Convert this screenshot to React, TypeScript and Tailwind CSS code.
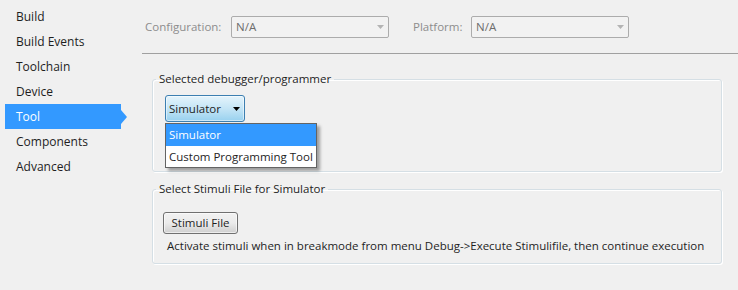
const navItems = ["Build", "Build Events", "Toolchain", "Device", "Tool", "Components", "Advanced"];

function Caret({ color }: { color: string }) {
  return (
    <svg width="7" height="4" viewBox="0 0 7 4" className="shrink-0">
      <path d="M0 0h7L3.5 4z" fill={color} />
    </svg>
  );
}

function DisabledSelect() {
  return (
    <div className="flex h-[22px] w-[158px] items-center justify-between rounded-[2px] border border-[#acacac] bg-[#f2f2f2] pl-[4px] pr-[4px] text-[#6d6d6d]">
      <span>N/A</span>
      <Caret color="#b4b4b4" />
    </div>
  );
}

export default function App() {
  return (
    <div className="flex h-[290px] w-[738px] whitespace-nowrap bg-[#f0f0f0] font-['Open_Sans',sans-serif] text-[11.5px] text-[#1e1e1e]">
      {/* Left nav */}
      <div className="flex w-[142px] shrink-0 flex-col pl-[5px] pt-[4px] text-[12px]">
        {navItems.map((item) =>
          item === "Tool" ? (
            <div key={item} className="relative flex h-[25px] w-[116px] items-center bg-[#3399ff] pl-[11px] text-white">
              {item}
              <span className="absolute left-full top-1/2 h-0 w-0 -translate-y-1/2 border-y-[7px] border-l-[6px] border-y-transparent border-l-[#3399ff]" />
            </div>
          ) : (
            <div key={item} className="flex h-[25px] items-center pl-[11px]">
              {item}
            </div>
          )
        )}
      </div>

      {/* Right panel */}
      <div className="flex flex-1 flex-col">
        <div className="flex h-[54px] items-start border-b border-[#a0a0a0] pl-[3px] pt-[16px]">
          <div className="flex h-[22px] w-[86px] items-center text-[#8d8d8d]">Configuration:</div>
          <DisabledSelect />
          <div className="ml-[24px] flex h-[22px] w-[58px] items-center text-[#8d8d8d]">Platform:</div>
          <DisabledSelect />
        </div>

        {/* Group 1 */}
        <fieldset className="relative ml-[10px] mt-[17px] h-[101px] w-[570px] rounded-[3px] border border-[#d5dfe5] shadow-[1px_1px_0_#fff,inset_1px_1px_0_#fff]">
          <legend className="ml-[3px] px-[3px] leading-[16px]">Selected debugger/programmer</legend>
          <div className="ml-[12px] mt-[8px] flex h-[27px] w-[80px] items-center justify-between rounded-[3px] border border-[#3c7fb1] bg-gradient-to-b from-[#e5f4fc] via-[#c4e5f6] to-[#98d1ef] pl-[3px] pr-[4px] shadow-[inset_0_0_0_1px_rgba(255,255,255,0.5)]">
            <span>Simulator</span>
            <Caret color="#000" />
          </div>

          {/* Open dropdown list */}
          <div className="absolute left-[12px] top-[36px] z-10 flex w-[152px] flex-col border border-[#646464] bg-white shadow-[3px_3px_3px_rgba(0,0,0,0.35)]">
            <div className="flex h-[22px] items-center bg-[#3399ff] pl-[3px] text-white">Simulator</div>
            <div className="flex h-[21px] items-center pl-[3px]">Custom Programming Tool</div>
          </div>
        </fieldset>

        {/* Group 2 */}
        <fieldset className="ml-[10px] mt-[9px] h-[83px] w-[570px] rounded-[3px] border border-[#d5dfe5] shadow-[1px_1px_0_#fff,inset_1px_1px_0_#fff]">
          <legend className="ml-[3px] px-[3px] leading-[16px]">Select Stimuli File for Simulator</legend>
          <div className="ml-[10px] mt-[15px] flex flex-col items-start">
            <button className="flex h-[22px] w-[75px] items-center justify-center rounded-[3px] border border-[#707070] bg-gradient-to-b from-[#f2f2f2] via-[#ebebeb] to-[#cfcfcf] shadow-[inset_0_0_0_1px_rgba(255,255,255,0.6)]">
              Stimuli File
            </button>
            <div className="ml-[4px] mt-[4px] leading-[16px]">
              Activate stimuli when in breakmode from menu Debug-&gt;Execute Stimulifile, then continue execution
            </div>
          </div>
        </fieldset>
      </div>
    </div>
  );
}
